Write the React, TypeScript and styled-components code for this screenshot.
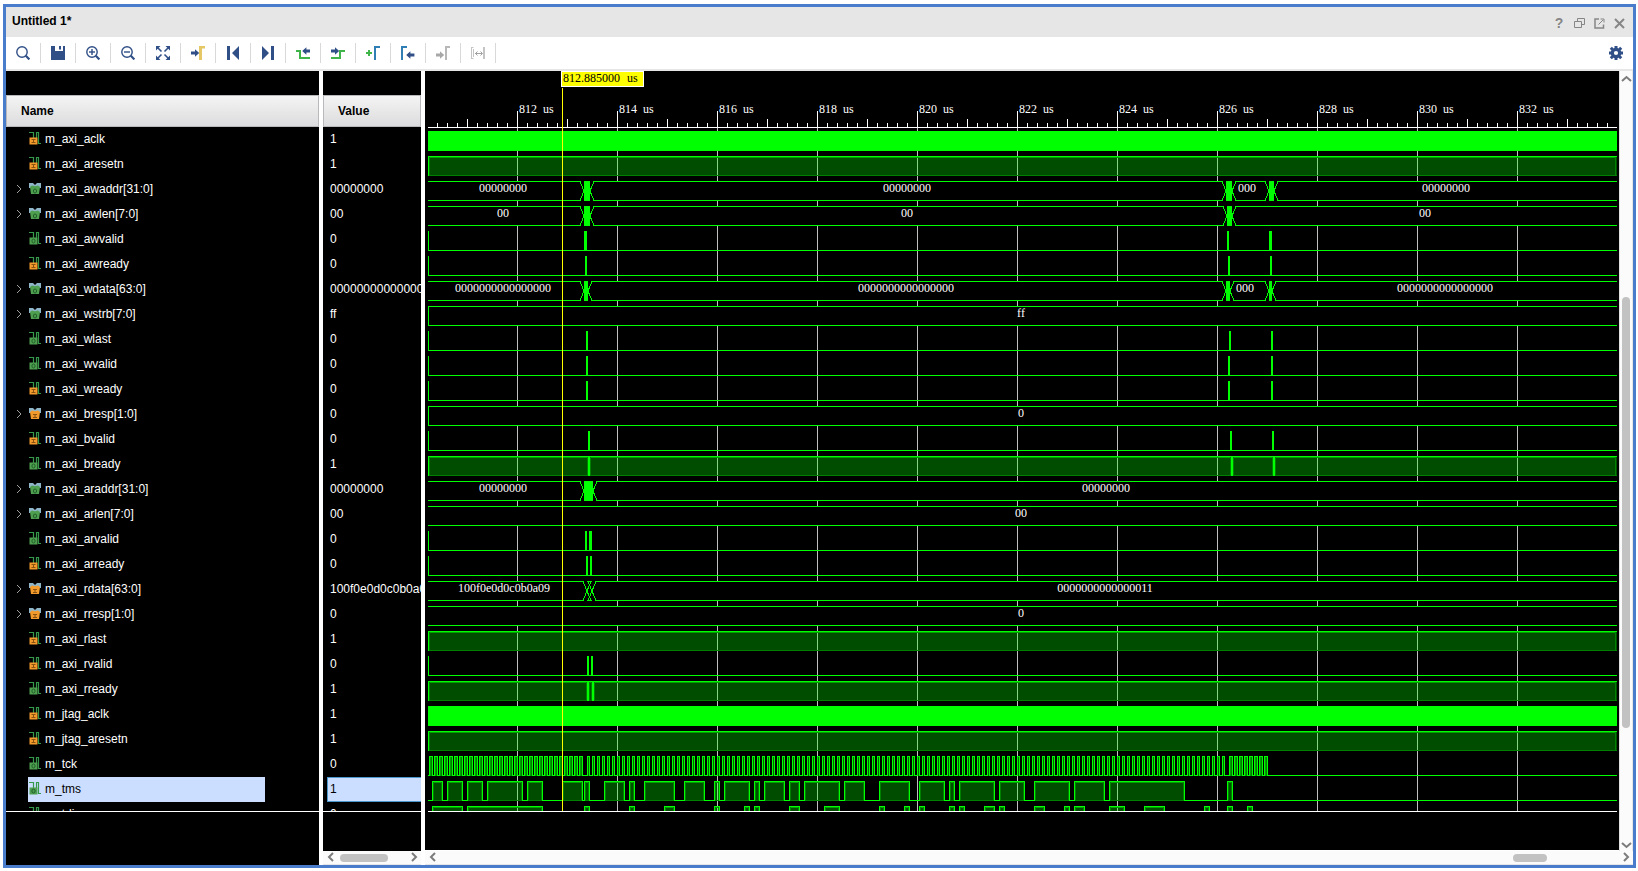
import React, { useLayoutEffect, useRef, useState } from "react";
import styled, { createGlobalStyle, css } from "styled-components";

const GlobalStyle = createGlobalStyle`
  *, *::before, *::after { box-sizing: border-box; }
  body { margin: 0; background: #fff; }
  button { border: 0; padding: 0; background: none; font: inherit; color: inherit; cursor: pointer; }
`;

/* ---------- colours ---------- */
const NAVY = "#304f86";
const BLUE = "#2f7fb5";
const GREEN = "#3fb549";
const YELLOW = "#e5c766";
const MUTED = "#b8b8b8";
const WAVE = "#00ff00";
const WAVE_MID = "#00a000";
const WAVE_DIM = "#008000";

/* ---------- signals ---------- */
type Span = [number, number];
type Change = { from: number; solid?: Span; to: number };
type Wave =
  | { kind: "clock" }
  | { kind: "low"; pulses: Span[] }
  | { kind: "high"; pulses: Span[] }
  | { kind: "bus"; edge?: boolean; changes: Change[]; labels: string[] }
  | { kind: "levels"; highs: Span[]; dense?: boolean };

type Signal = { name: string; value: string; dir: "in" | "out"; bus?: boolean; selected?: boolean; wave: Wave };

const train = (start: number, count: number, width: number): Span[] =>
  Array.from({ length: count }, (_, i) => [start + i * 5, start + i * 5 + width] as Span);

const low = (...pulses: Span[]): Wave => ({ kind: "low", pulses });
const high = (...pulses: Span[]): Wave => ({ kind: "high", pulses });
const change = (from: number, a: number, b: number, to: number): Change => ({ from, solid: [a, b], to });

const SIGNALS: Signal[] = [
  { name: "m_axi_aclk", value: "1", dir: "in", wave: { kind: "clock" } },
  { name: "m_axi_aresetn", value: "1", dir: "in", wave: high() },
  { name: "m_axi_awaddr[31:0]", value: "00000000", dir: "out", bus: true,
    wave: { kind: "bus", changes: [change(152, 156, 162, 166), change(794, 798, 804, 808), change(837, 841, 846, 850)], labels: ["00000000", "00000000", "000", "00000000"] } },
  { name: "m_axi_awlen[7:0]", value: "00", dir: "out", bus: true,
    wave: { kind: "bus", changes: [change(152, 156, 162, 166), change(795, 799, 804, 808)], labels: ["00", "00", "00"] } },
  { name: "m_axi_awvalid", value: "0", dir: "out", wave: low([156, 159], [799, 801], [841, 844]) },
  { name: "m_axi_awready", value: "0", dir: "in", wave: low([157, 159], [800, 802], [842, 844]) },
  { name: "m_axi_wdata[63:0]", value: "0000000000000000", dir: "out", bus: true,
    wave: { kind: "bus", changes: [change(152, 156, 160, 164), change(794, 798, 802, 806), change(837, 841, 844, 848)], labels: ["0000000000000000", "0000000000000000", "000", "0000000000000000"] } },
  { name: "m_axi_wstrb[7:0]", value: "ff", dir: "out", bus: true, wave: { kind: "bus", edge: true, changes: [], labels: ["ff"] } },
  { name: "m_axi_wlast", value: "0", dir: "out", wave: low([158, 160], [801, 803], [843, 845]) },
  { name: "m_axi_wvalid", value: "0", dir: "out", wave: low([158, 160], [800, 802], [843, 845]) },
  { name: "m_axi_wready", value: "0", dir: "in", wave: low([158, 160], [800, 802], [843, 845]) },
  { name: "m_axi_bresp[1:0]", value: "0", dir: "in", bus: true, wave: { kind: "bus", edge: true, changes: [], labels: ["0"] } },
  { name: "m_axi_bvalid", value: "0", dir: "in", wave: low([160, 162], [802, 804], [844, 846]) },
  { name: "m_axi_bready", value: "1", dir: "out", wave: high([160, 162], [803, 805], [845, 847]) },
  { name: "m_axi_araddr[31:0]", value: "00000000", dir: "out", bus: true,
    wave: { kind: "bus", changes: [change(152, 156, 165, 169)], labels: ["00000000", "00000000"] } },
  { name: "m_axi_arlen[7:0]", value: "00", dir: "out", bus: true, wave: { kind: "bus", changes: [], labels: ["00"] } },
  { name: "m_axi_arvalid", value: "0", dir: "out", wave: low([157, 159], [161, 164]) },
  { name: "m_axi_arready", value: "0", dir: "in", wave: low([158, 160], [162, 164]) },
  { name: "m_axi_rdata[63:0]", value: "100f0e0d0c0b0a09", dir: "in", bus: true,
    wave: { kind: "bus", changes: [{ from: 155, to: 168 }], labels: ["100f0e0d0c0b0a09", "0000000000000011"] } },
  { name: "m_axi_rresp[1:0]", value: "0", dir: "in", bus: true, wave: { kind: "bus", changes: [], labels: ["0"] } },
  { name: "m_axi_rlast", value: "1", dir: "in", wave: high() },
  { name: "m_axi_rvalid", value: "0", dir: "in", wave: low([159, 161], [163, 165]) },
  { name: "m_axi_rready", value: "1", dir: "out", wave: high([159, 161], [164, 166]) },
  { name: "m_jtag_aclk", value: "1", dir: "in", wave: { kind: "clock" } },
  { name: "m_jtag_aresetn", value: "1", dir: "in", wave: high() },
  { name: "m_tck", value: "0", dir: "out", wave: { kind: "levels", dense: true, highs: [...train(1, 31, 4), ...train(159, 128, 3), ...train(801, 8, 4)] } },
  { name: "m_tms", value: "1", dir: "out", selected: true,
    wave: { kind: "levels", highs: [[4, 15], [19, 35], [39, 55], [59, 95], [99, 115], [134, 155], [156, 162], [176, 197], [201, 207], [216, 247], [256, 277], [286, 292], [296, 322], [326, 332], [336, 357], [361, 372], [376, 412], [416, 437], [451, 482], [491, 517], [521, 527], [531, 567], [571, 597], [606, 642], [646, 677], [681, 757], [799, 805]] } },
  { name: "m_tdi", value: "0", dir: "out",
    wave: { kind: "levels", highs: [[4, 35], [39, 115], [156, 162], [201, 207], [236, 247], [286, 292], [316, 322], [326, 332], [361, 372], [396, 412], [451, 457], [476, 482], [491, 497], [521, 527], [531, 537], [556, 567], [571, 577], [606, 617], [636, 642], [646, 657], [681, 697], [716, 737], [776, 782], [799, 805], [819, 825]] } },
];

/* ---------- window frame ---------- */
const Page = styled.div`
  height: 100vh;
  min-height: 300px;
  padding: 4px 2px 3px 3px;
  font: 12px/16px "Liberation Sans", Arial, sans-serif;
  color: #000;
`;
const Frame = styled.main`
  height: 100%;
  display: flex;
  flex-direction: column;
  border: 3px solid #4a7ccc;
  background: #fff;
`;
const TitleBar = styled.header`
  flex: none;
  display: flex;
  align-items: center;
  justify-content: space-between;
  height: 30px;
  padding: 0 4px 0 6px;
  background: #e6e6e6;
`;
const Title = styled.h1`
  margin: 0;
  padding-bottom: 2px;
  font-size: 12px;
  line-height: 16px;
  font-weight: 700;
`;
const WindowActions = styled.div`
  display: flex;
  padding-top: 2px;
`;
const WindowButton = styled.button`
  width: 20px;
  height: 20px;
  display: grid;
  place-items: center;
  color: #868686;
  font-size: 14px;
  font-weight: 700;
`;
const Toolbar = styled.nav`
  flex: none;
  display: flex;
  align-items: center;
  height: 34px;
  border-bottom: 2px solid #e6e6e6;
`;
const ToolButton = styled.button`
  width: 35px;
  height: 20px;
  display: grid;
  place-items: center;
  border-right: 1px solid #d9d9d9;
`;
const SettingsButton = styled.button`
  width: 34px;
  height: 20px;
  margin-left: auto;
  display: grid;
  place-items: center;
`;

/* ---------- panels ---------- */
const Content = styled.div`
  flex: 1;
  min-height: 0;
  display: flex;
`;
const Panel = styled.section<{ $width: number }>`
  flex: none;
  width: ${(p) => p.$width}px;
  display: flex;
  flex-direction: column;
  background: #000;
`;
const Splitter = styled.div`
  flex: none;
  width: 4px;
  background: #fff;
`;
const PanelRows = styled.div`
  flex: 1;
  min-height: 0;
  overflow: hidden;
  padding-top: 24px;
  border-bottom: 1px solid #fff;
`;
const PanelFooter = styled.div<{ $scroll?: boolean }>`
  flex: none;
  height: 53px;
  ${(p) => p.$scroll && css`padding-top: 39px;`}
`;
const SignalTable = styled.table`
  width: 100%;
  table-layout: fixed;
  border-collapse: separate;
  border-spacing: 0;
`;
const HeadCell = styled.th`
  height: 32px;
  padding: 0 14px;
  border: 1px solid #b9b9bb;
  background: linear-gradient(#f4f4f4, #dcdcde);
  text-align: left;
  font-weight: 700;
`;
const NameCell = styled.td`
  height: 25px;
  padding: 0 54px 0 4px;
  color: #fff;
`;
const NameLine = styled.div`
  display: flex;
  align-items: center;
  height: 25px;
`;
const ExpandSlot = styled.span`
  flex: none;
  width: 18px;
  height: 25px;
`;
const ExpandButton = styled.button`
  width: 18px;
  height: 25px;
  display: grid;
  place-items: center;
`;
const NameLabel = styled.span<{ $selected?: boolean }>`
  flex: 1;
  display: flex;
  align-items: center;
  gap: 3px;
  height: 25px;
  padding: 0 0 2px 1px;
  white-space: nowrap;
  ${(p) => p.$selected && css`background: #ccdeff; color: #000;`}
`;
const ValueCell = styled.td`
  height: 25px;
  padding: 0 0 0 4px;
  color: #fff;
`;
const ValueLabel = styled.div<{ $selected?: boolean }>`
  height: 25px;
  padding-left: 2px;
  overflow: hidden;
  white-space: nowrap;
  line-height: 22px;
  border: 1px solid transparent;
  border-right: 0;
  ${(p) => p.$selected && css`background: #ccdeff; color: #000; border-color: #4a98cc;`}
`;

/* ---------- scroll bars ---------- */
const HScroll = styled.div`
  flex: none;
  display: flex;
  align-items: center;
  height: 14px;
  background: #fbfbfb;
  border-bottom: 1px solid #e6e6e6;
`;
const VScroll = styled.div`
  flex: none;
  width: 14px;
  display: flex;
  flex-direction: column;
  align-items: center;
  padding-top: 2px;
  background: #fbfbfb;
  border-left: 1px solid #e0e0e0;
  border-right: 1px solid #e6e6e6;
`;
const ScrollButton = styled.button`
  flex: none;
  width: 14px;
  height: 12px;
  display: grid;
  place-items: center;
`;
const Spacer = styled.div<{ $grow: number }>`
  flex: ${(p) => p.$grow} 1 0;
`;
const Thumb = styled.div<{ $grow: number; $vertical?: boolean }>`
  flex: ${(p) => p.$grow} 1 0;
  ${(p) => (p.$vertical ? "width: 8px;" : "height: 8px;")}
  border-radius: 4px;
  background: #c2c2c2;
`;

/* ---------- wave view ---------- */
const WaveColumn = styled.section`
  flex: 1;
  min-width: 0;
  display: flex;
  flex-direction: column;
`;
const WaveBody = styled.div`
  flex: 1;
  min-height: 0;
  display: flex;
`;
const WavePane = styled.div`
  flex: 1;
  min-width: 0;
  display: flex;
  flex-direction: column;
  padding: 0 2px 38px 3px;
  background: #000;
  border-bottom: 1px solid #fff;
`;
const WaveArea = styled.div`
  position: relative;
  flex: 1;
  min-height: 0;
  overflow: hidden;
  border-bottom: 1px solid #fff;
`;
const WaveSvg = styled.svg`
  display: block;
  width: 100%;
  height: 100%;
  shape-rendering: crispEdges;
  text { fill: #fff; font: 12px "Liberation Serif", serif; }
`;
const CursorTag = styled.output`
  position: absolute;
  top: 0;
  left: 133px;
  width: 83px;
  height: 16px;
  padding-left: 1px;
  border: 1px solid #fff;
  background: #ff0;
  color: #000;
  font: 12px/12px "Liberation Serif", serif;
  white-space: nowrap;
`;
const Unit = styled.span`
  margin-left: 4px;
`;
const CursorLine = styled.div`
  position: absolute;
  top: 17px;
  bottom: 0;
  left: 134px;
  width: 1px;
  background: #ff0;
`;

/* ---------- icons ---------- */
const Icon = ({ size = 14, children }: { size?: number; children: React.ReactNode }) => (
  <svg width={size} height={size} viewBox={`0 0 ${size} ${size}`} fill="none" aria-hidden="true">{children}</svg>
);
const Lens = ({ sign }: { sign?: "plus" | "minus" }) => (
  <Icon>
    <circle cx="6" cy="6" r="5.2" stroke={NAVY} strokeWidth="1.4" />
    <path d="M9.8 9.8 13.4 13.4" stroke={NAVY} strokeWidth="2.2" />
    {sign && <path d="M3 6h6" stroke={NAVY} strokeWidth="1.4" />}
    {sign === "plus" && <path d="M6 3v6" stroke={NAVY} strokeWidth="1.4" />}
  </Icon>
);
const ARROW_RIGHT = "M0 -1.5h4v-2.2l4.2 3.7l-4.2 3.7v-2.2h-4z";
const ARROW_LEFT = "M8.4 -1.5h-4v-2.2l-4.2 3.7l4.2 3.7v-2.2h4z";

const TOOLS: { label: string; icon: React.ReactNode }[] = [
  { label: "Find", icon: <Lens /> },
  { label: "Save", icon: <Icon><path d="M0 0h4v5h8V0h2v14H0zM8 0h2v3.5H8z" fill={NAVY} /></Icon> },
  { label: "Zoom in", icon: <Lens sign="plus" /> },
  { label: "Zoom out", icon: <Lens sign="minus" /> },
  { label: "Zoom fit", icon: (
    <Icon>
      <path d="M0 0h4.500L0 4.500zM14 0v4.500L9.500 0zM0 14V9.500L4.500 14zM14 14H9.500L14 9.500z" fill={NAVY} />
      <path d="M1.500 1.500l4 4M12.500 1.500l-4 4M1.500 12.500l4-4M12.500 12.500l-4-4" stroke={NAVY} strokeWidth="1.600" />
    </Icon>
  ) },
  { label: "Go to cursor", icon: <Icon><path d="M8 0h6v2.500h-3V14H8z" fill={YELLOW} /><path transform="translate(0 7)" d={ARROW_RIGHT} fill={NAVY} /></Icon> },
  { label: "Go to start", icon: <Icon><path d="M1 0h3v14H1zM13 0v14L6 7z" fill={NAVY} /></Icon> },
  { label: "Go to end", icon: <Icon><path d="M10 0h3v14h-3zM1 0v14l7-7z" fill={NAVY} /></Icon> },
  { label: "Previous transition", icon: <Icon><path d="M0 5h4v7h10" stroke={GREEN} strokeWidth="2" /><path transform="translate(6 5)" d={ARROW_LEFT} fill={NAVY} /></Icon> },
  { label: "Next transition", icon: <Icon><path d="M0 12h9V5h5" stroke={GREEN} strokeWidth="2" /><path transform="translate(0 5)" d={ARROW_RIGHT} fill={NAVY} /></Icon> },
  { label: "Add marker", icon: <Icon><path d="M0 7h6M3 4v6" stroke={GREEN} strokeWidth="2" /><path d="M9 14V1h5" stroke={BLUE} strokeWidth="2" /></Icon> },
  { label: "Previous marker", icon: <Icon><path d="M1 14V1h5" stroke={BLUE} strokeWidth="2" /><path transform="translate(5 9)" d={ARROW_LEFT} fill={NAVY} /></Icon> },
  { label: "Next marker", icon: <Icon><path d="M10 14V1h4" stroke={MUTED} strokeWidth="2" /><path transform="translate(0 9)" d={ARROW_RIGHT} fill="#a8a8a8" /></Icon> },
  { label: "Swap cursors", icon: <Icon><path d="M.5 1v12M2.500 3v8M.5 1.500h2M.5 12.500h2M12.500 1v12M13.500 1v12" stroke="#c4c4c4" /><path d="M4 7.500h7M6.500 5.500l-2 2 2 2M9.500 5.500l2 2-2 2" stroke="#a0a0a0" /></Icon> },
];

const GearIcon = () => (
  <Icon>
    <circle cx="7" cy="7" r="3.700" stroke={NAVY} strokeWidth="3.200" />
    <path d="M7 0v3M7 11v3M0 7h3M11 7h3M1.800 1.800l2 2M10.200 10.200l2 2M1.800 12.200l2-2M10.200 3.800l2-2" stroke={NAVY} strokeWidth="3" />
  </Icon>
);

const ScalarIcon = ({ color }: { color: string }) => (
  <>
    <path d="M0 .5h4.500V6M7.500 6V.5h2V11.500H12" stroke="#35984a" strokeWidth="1.200" />
    <path d="M.5 5.500h8v7h-8z" fill={color} />
  </>
);
const BusIcon = ({ color }: { color: string }) => (
  <>
    <path d="M0 1h4l2 2 2-2h4v5H0z" fill="#8fb5c9" />
    <path d="M1 5l2-1.500 3 .8 3-.8L11 5l-1 7H2z" fill={color} />
  </>
);
const SignalIcon = ({ signal }: { signal: Signal }) => {
  const color = signal.dir === "in" ? "#f29a2c" : "#4f9f50";
  const mid = signal.bus ? 6 : 4.5;
  return (
    <Icon size={13}>
      {signal.bus ? <BusIcon color={color} /> : <ScalarIcon color={color} />}
      {signal.dir === "in"
        ? <path d={`M${mid - 2} 7.500h4M${mid - 2} 10.500h4M${mid} 7.500v3`} stroke="#8a5210" />
        : <ellipse cx={mid} cy="9" rx="1.600" ry="2" stroke="#1f5f28" />}
    </Icon>
  );
};

const CHEVRON = { left: "M8 1 4 5l4 4", right: "M3 1l4 4-4 4", up: "M1 7l4.500-4L10 7", down: "M1 3l4.500 4L10 3" };
const Chevron = ({ to, color = "#7c7c7c", width = 2 }: { to: keyof typeof CHEVRON; color?: string; width?: number }) => (
  <Icon size={11}><path d={CHEVRON[to]} stroke={color} strokeWidth={width} /></Icon>
);

/* ---------- wave drawing ---------- */
const RULER = 56;
const ROW = 25;
const TOP = 4;
const BOTTOM = 23;
const FIRST_MAJOR = 89;
const MAJOR = 100;

const Box = ({ x, y, w, h, fill = WAVE }: { x: number; y: number; w: number; h: number; fill?: string }) => (
  <rect x={x} y={y} width={Math.max(0, w)} height={h} fill={fill} />
);

const HighFill = ({ from, to }: { from: number; to: number }) => (
  <>
    <rect x={from} y={TOP} width={to - from} height={20} fill={WAVE} fillOpacity={0.3} />
    <Box x={from} y={BOTTOM} w={to - from} h={1} fill={WAVE_DIM} />
    <Box x={from + 1} y={TOP + 1} w={to - from - 2} h={1} fill={WAVE_MID} />
    <Box x={from + 1} y={TOP + 1} w={1} h={19} fill={WAVE_DIM} />
    <Box x={to - 2} y={TOP + 1} w={1} h={19} fill={WAVE_DIM} />
    <Box x={from} y={TOP} w={to - from} h={1} />
    <Box x={from} y={TOP} w={1} h={20} />
  </>
);

/* A label is centred in its segment; a segment too short for that starts it at the left. */
const BusLabel = ({ from, to, text }: { from: number; to: number; text: string }) =>
  to - from < 40
    ? <text x={from + 2} y={15}>{text}</text>
    : <text x={Math.floor((from + to) / 2) - 1} y={15} textAnchor="middle">{text}</text>;

const BusWave = ({ wave, width }: { wave: Extract<Wave, { kind: "bus" }>; width: number }) => {
  const starts = [0, ...wave.changes.map((c) => c.to)];
  const ends = [...wave.changes.map((c) => c.from), width];
  return (
    <>
      <Box x={0} y={TOP} w={width} h={20} fill="#000" />
      {wave.edge && <Box x={0} y={TOP} w={1} h={20} />}
      {starts.map((start, i) => (
        <g key={start}>
          <Box x={start} y={TOP} w={ends[i] - start} h={1} />
          <Box x={start} y={BOTTOM} w={ends[i] - start} h={1} />
          <BusLabel from={start} to={ends[i]} text={wave.labels[i]} />
        </g>
      ))}
      {wave.changes.map((c) =>
        c.solid ? (
          <g key={c.from}>
            <path d={`M${c.from} 4.500L${c.solid[0]} 14L${c.from} 23.500M${c.to} 4.500L${c.solid[1]} 14L${c.to} 23.500`} stroke={WAVE} fill="none" />
            <Box x={c.solid[0]} y={TOP} w={c.solid[1] - c.solid[0]} h={20} />
          </g>
        ) : (
          <path key={c.from} stroke={WAVE} fill="none"
            d={`M${c.from} 4.500L${c.from + 8} 23.500H${c.to - 8}L${c.to} 4.500M${c.from} 23.500L${c.from + 8} 4.500H${c.to - 8}L${c.to} 23.500`} />
        ),
      )}
    </>
  );
};

const WaveRow = ({ wave, width }: { wave: Wave; width: number }) => {
  switch (wave.kind) {
    case "clock":
      return <Box x={0} y={TOP} w={width} h={20} />;
    case "bus":
      return <BusWave wave={wave} width={width} />;
    case "low":
      return (
        <>
          <Box x={0} y={TOP} w={1} h={20} />
          <Box x={0} y={BOTTOM} w={width} h={1} />
          {wave.pulses.map(([a, b]) => <Box key={a} x={a} y={TOP} w={b - a} h={20} />)}
        </>
      );
    case "high":
      return (
        <>
          <HighFill from={0} to={width} />
          {wave.pulses.map(([a, b]) => (
            <g key={a}>
              <Box x={a - 1} y={TOP + 1} w={b - a + 2} h={19} fill={WAVE_DIM} />
              <Box x={a} y={TOP} w={b - a} h={20} />
            </g>
          ))}
        </>
      );
    case "levels":
      return (
        <>
          {[0, ...wave.highs.map((h) => h[1])].map((start, i) => (
            <Box key={start} x={start} y={BOTTOM} w={(wave.highs[i]?.[0] ?? width) - start} h={1} />
          ))}
          {wave.highs.map(([a, b]) => (
            <g key={a}>
              {wave.dense ? (
                <>
                  <Box x={a} y={TOP} w={b - a} h={20} />
                  <Box x={a + 1} y={TOP + 1} w={1} h={19} fill={b - a > 3 ? WAVE_MID : "#006400"} />
                  {b - a > 3 && <Box x={a + 2} y={TOP + 1} w={1} h={19} fill={WAVE_DIM} />}
                </>
              ) : (
                <>
                  <HighFill from={a} to={b} />
                  <Box x={b - 1} y={TOP} w={1} h={20} />
                </>
              )}
            </g>
          ))}
        </>
      );
  }
};

const WaveView = () => {
  const area = useRef<HTMLDivElement>(null);
  const [width, setWidth] = useState(1189);
  useLayoutEffect(() => {
    const node = area.current;
    if (!node) return;
    const measure = () => setWidth(node.clientWidth);
    measure();
    const observer = new ResizeObserver(measure);
    observer.observe(node);
    return () => observer.disconnect();
  }, []);

  const majors = Array.from({ length: Math.ceil((width - FIRST_MAJOR) / MAJOR) }, (_, i) => FIRST_MAJOR + i * MAJOR);
  const ticks = Array.from({ length: Math.ceil((width - 9) / 10) }, (_, i) => 9 + i * 10);

  return (
    <WaveArea ref={area}>
      <WaveSvg role="img" aria-label="Waveforms">
        {majors.map((x) => <Box key={x} x={x} y={RULER} w={1} h={ROW * SIGNALS.length} fill="#c0c0c0" />)}
        {SIGNALS.map((s, i) => (
          <g key={s.name} transform={`translate(0 ${RULER + i * ROW})`}>
            <WaveRow wave={s.wave} width={width} />
          </g>
        ))}
        {ticks.map((x) => {
          const length = (x - FIRST_MAJOR) % MAJOR === 0 ? 16 : (x - FIRST_MAJOR) % 50 === 0 ? 8 : 4;
          return <Box key={x} x={x} y={RULER - length} w={1} h={length} fill="#fff" />;
        })}
        <Box x={0} y={RULER} w={width} h={1} fill="#fff" />
        {majors.map((x, i) => (
          <text key={x} x={x + 2} y={42}>{`${812 + i * 2} `}<tspan dx={3}>us</tspan></text>
        ))}
      </WaveSvg>
      <CursorLine />
      <CursorTag>812.885000 <Unit>us</Unit></CursorTag>
    </WaveArea>
  );
};

export default function App() {
  return (
    <>
      <GlobalStyle />
      <Page>
        <Frame>
          <TitleBar>
            <Title>Untitled 1*</Title>
            <WindowActions>
              <WindowButton aria-label="Help">?</WindowButton>
              <WindowButton aria-label="Restore">
                <Icon size={11}><path d="M3.500 3V.5h7v6H8M.5 3.500h7v6h-7z" stroke="currentColor" /></Icon>
              </WindowButton>
              <WindowButton aria-label="Float">
                <Icon size={11}><path d="M5 1H1v9h8.500V6.500" stroke="currentColor" strokeWidth="1.500" /><path d="M4.500 6.500 9 2M6.500 1H10v3.500" stroke="currentColor" /></Icon>
              </WindowButton>
              <WindowButton aria-label="Close">
                <Icon size={11}><path d="M1 1l9 9M10 1l-9 9" stroke="currentColor" strokeWidth="2" /></Icon>
              </WindowButton>
            </WindowActions>
          </TitleBar>
          <Toolbar aria-label="Waveform tools">
            {TOOLS.map((t) => <ToolButton key={t.label} aria-label={t.label}>{t.icon}</ToolButton>)}
            <SettingsButton aria-label="Settings"><GearIcon /></SettingsButton>
          </Toolbar>
          <Content>
            <Panel $width={313}>
              <PanelRows>
                <SignalTable>
                  <thead><tr><HeadCell scope="col">Name</HeadCell></tr></thead>
                  <tbody>
                    {SIGNALS.map((s) => (
                      <tr key={s.name}>
                        <NameCell>
                          <NameLine>
                            {s.bus
                              ? <ExpandButton aria-label={`Expand ${s.name}`}><Chevron to="right" color="#a0a0a0" width={1} /></ExpandButton>
                              : <ExpandSlot />}
                            <NameLabel $selected={s.selected}><SignalIcon signal={s} />{s.name}</NameLabel>
                          </NameLine>
                        </NameCell>
                      </tr>
                    ))}
                  </tbody>
                </SignalTable>
              </PanelRows>
              <PanelFooter />
            </Panel>
            <Splitter />
            <Panel $width={98}>
              <PanelRows>
                <SignalTable>
                  <thead><tr><HeadCell scope="col">Value</HeadCell></tr></thead>
                  <tbody>
                    {SIGNALS.map((s) => (
                      <tr key={s.name}>
                        <ValueCell><ValueLabel $selected={s.selected}>{s.value}</ValueLabel></ValueCell>
                      </tr>
                    ))}
                  </tbody>
                </SignalTable>
              </PanelRows>
              <PanelFooter $scroll>
                <HScroll>
                  <ScrollButton aria-label="Scroll values left"><Chevron to="left" /></ScrollButton>
                  <Spacer $grow={3} />
                  <Thumb $grow={48} />
                  <Spacer $grow={19} />
                  <ScrollButton aria-label="Scroll values right"><Chevron to="right" /></ScrollButton>
                </HScroll>
              </PanelFooter>
            </Panel>
            <Splitter />
            <WaveColumn>
              <WaveBody>
                <WavePane><WaveView /></WavePane>
                <VScroll>
                  <ScrollButton aria-label="Scroll up"><Chevron to="up" /></ScrollButton>
                  <Spacer $grow={212} />
                  <Thumb $grow={431} $vertical />
                  <Spacer $grow={111} />
                  <ScrollButton aria-label="Scroll down"><Chevron to="down" /></ScrollButton>
                </VScroll>
              </WaveBody>
              <HScroll>
                <ScrollButton aria-label="Scroll waveform left"><Chevron to="left" /></ScrollButton>
                <Spacer $grow={1074} />
                <Thumb $grow={34} />
                <Spacer $grow={72} />
                <ScrollButton aria-label="Scroll waveform right"><Chevron to="right" /></ScrollButton>
              </HScroll>
            </WaveColumn>
          </Content>
        </Frame>
      </Page>
    </>
  );
}
